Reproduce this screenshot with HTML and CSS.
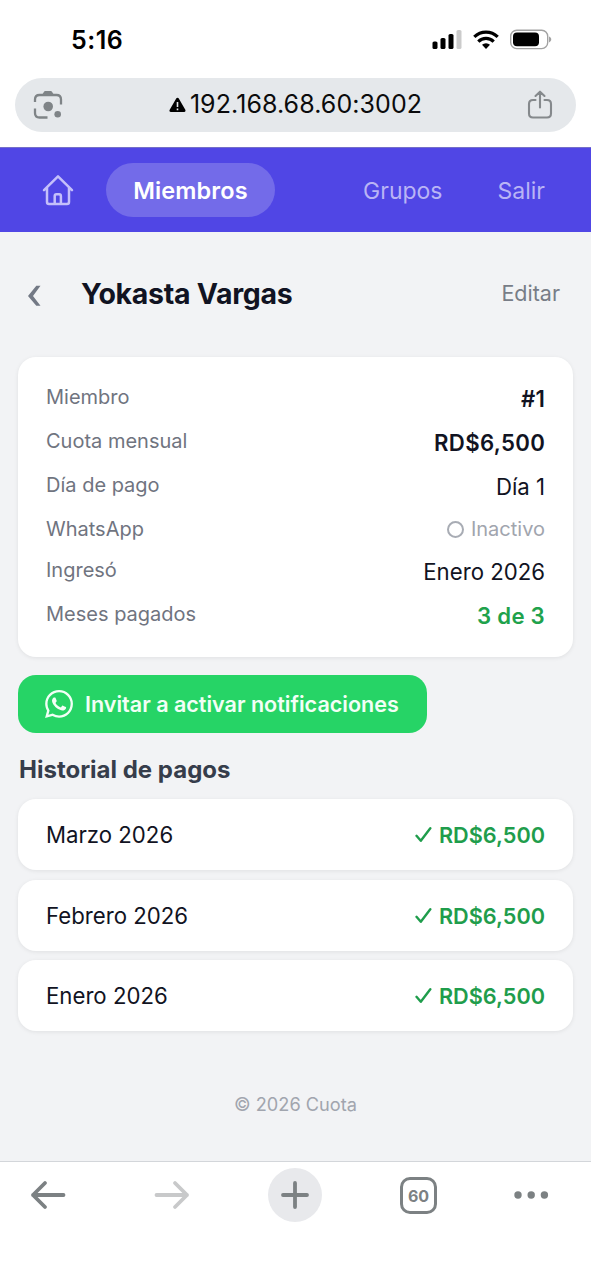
FILE: index.html
```html
<!DOCTYPE html>
<html lang="es">
<head>
<meta charset="utf-8">
<title>Cuota</title>
<link rel="stylesheet" href="styles.css">
</head>
<body>
<div class="status">
  <span class="clock">5:16</span>
  <svg class="status-icons" width="120" height="22" viewBox="0 0 120 22">
    <rect x="0.5" y="12.5" width="5" height="7.5" rx="1.6"/>
    <rect x="8.5" y="9" width="5" height="11" rx="1.6"/>
    <rect x="16.5" y="5" width="5" height="15" rx="1.6"/>
    <rect x="24.5" y="1" width="5" height="19" rx="1.6" fill="#cbcbcb"/>
    <path d="M54 20l-4-4.2a5.8 5.8 0 0 1 8 0z"/>
    <path d="M42.3 7.900a16.8 16.8 0 0 1 23.4 0M46.300 12.600a11 11 0 0 1 15.400 0" fill="none" stroke="#000" stroke-width="3.2"/>
    <rect x="78.700" y="1.200" width="37" height="18.400" rx="6" fill="none" stroke="#a2a2a2" stroke-width="1.4"/>
    <rect x="81" y="3.500" width="26" height="13.800" rx="4"/>
    <path d="M117 7.600c3 1 3 4.800 0 5.800z" fill="#a2a2a2"/>
  </svg>
</div>
<div class="address">
  <svg width="30" height="30" viewBox="0 0 30 30" fill="none" stroke="#7f8487" stroke-width="2.300" stroke-linecap="round">
    <path d="M2 12V9.500Q2 5 6.500 5h17Q28 5 28 9.500V14.500M2 18.500v4.500Q2 27.500 6.500 27.500h8" stroke-linecap="butt"/>
    <path d="M9 5l2-3.300q.4-.7 1.200-.7h5.600q.8 0 1.200.7l2 3.300z" fill="#7f8487" stroke="none"/>
    <circle cx="15.200" cy="16.500" r="4.800" fill="#7f8487" stroke="none"/>
    <circle cx="24.700" cy="24.300" r="3.300" fill="#7f8487" stroke="none"/>
  </svg>
  <span class="url">
    <svg width="17" height="16" viewBox="0 0 17 16"><path d="M8.500 2.200L2 13.500h13z" stroke="#000" stroke-width="3" stroke-linejoin="round"/><path d="M8.500 5v5M8.500 11.500v1.800" stroke="#e5e8eb" stroke-width="1.600"/></svg>
    <span class="url-text">192.168.68.60:3002</span>
  </span>
  <svg class="share" width="26" height="30" viewBox="0 0 26 30" fill="none" stroke="#85898c" stroke-width="2.100" stroke-linecap="round" stroke-linejoin="round">
    <path d="M8.500 10H6Q2 10 2 14v9.500Q2 27.500 6 27.500h14q4 0 4-4V14q0-4-4-4h-2.500M13 17.500V1.800M8.500 6L13 1.700 17.500 6"/>
  </svg>
</div>
<nav class="nav">
  <svg class="home" width="32" height="32" viewBox="0 0 32 32" fill="none" stroke="#c4bffa" stroke-width="2.500" stroke-linecap="round" stroke-linejoin="round">
    <path d="M2 16.200L16 2.400l14 13.800M5 13.500V28q0 2 2 2h18q2 0 2-2V13.500M12.700 30v-8q0-1.700 1.700-1.700h2.800q1.700 0 1.700 1.700v8"/>
  </svg>
  <a class="tab">Miembros</a>
  <a class="link grupos">Grupos</a>
  <a class="link salir">Salir</a>
</nav>
<main class="page">
  <header class="head">
    <svg width="15" height="22" viewBox="0 0 15 22"><path d="M9.300.7h4.200L6 10.900l7.500 9.900H9.300L1 10.900z" fill="#737985"/></svg>
    <h1>Yokasta Vargas</h1>
    <a class="edit">Editar</a>
  </header>
  <section class="card">
    <div class="row"><span class="label">Miembro</span><span class="value bold">#1</span></div>
    <div class="row"><span class="label">Cuota mensual</span><span class="value bold">RD$6,500</span></div>
    <div class="row"><span class="label">Día de pago</span><span class="value">Día 1</span></div>
    <div class="row"><span class="label">WhatsApp</span><span class="inactive"><i class="ring"></i>Inactivo</span></div>
    <div class="row"><span class="label">Ingresó</span><span class="value">Enero 2026</span></div>
    <div class="row"><span class="label">Meses pagados</span><span class="value paid">3 de 3</span></div>
  </section>
  <a class="invite">
    <svg width="28" height="28" viewBox="0 0 24 24" fill="#f2fff6"><path d="M17.472 14.382c-.297-.149-1.758-.867-2.030-.967-.273-.099-.471-.148-.670.150-.197.297-.767.966-.940 1.164-.173.199-.347.223-.644.075-.297-.150-1.255-.463-2.390-1.475-.883-.788-1.480-1.761-1.653-2.059-.173-.297-.018-.458.130-.606.134-.133.298-.347.446-.520.149-.174.198-.298.298-.497.099-.198.050-.371-.025-.520-.075-.149-.669-1.612-.916-2.207-.242-.579-.487-.500-.669-.510-.173-.008-.371-.010-.570-.010-.198 0-.520.074-.792.372-.272.297-1.040 1.016-1.040 2.479 0 1.462 1.065 2.875 1.213 3.074.149.198 2.096 3.200 5.077 4.487.709.306 1.262.489 1.694.625.712.227 1.360.195 1.871.118.571-.085 1.758-.719 2.006-1.413.248-.694.248-1.289.173-1.413-.074-.124-.272-.198-.570-.347m-5.421 7.403h-.004a9.870 9.870 0 0 1-5.031-1.378l-.361-.214-3.741.982.998-3.648-.235-.374a9.860 9.860 0 0 1-1.510-5.260c.001-5.450 4.436-9.884 9.888-9.884 2.640 0 5.122 1.030 6.988 2.898a9.825 9.825 0 0 1 2.893 6.994c-.003 5.450-4.437 9.884-9.885 9.884m8.413-18.297A11.815 11.815 0 0 0 12.050 0C5.495 0 .160 5.335.157 11.892c0 2.096.547 4.142 1.588 5.945L.057 24l6.305-1.654a11.882 11.882 0 0 0 5.683 1.448h.005c6.554 0 11.890-5.335 11.893-11.893a11.821 11.821 0 0 0-3.480-8.413z"/></svg>
    <span>Invitar a activar notificaciones</span>
  </a>
  <h2>Historial de pagos</h2>
  <ul class="history">
    <li><span class="month">Marzo 2026</span><span class="amount"><svg class="check" width="17" height="18" viewBox="0 0 17 18"><path d="M1.500 9.800l4.300 5L15.300 2.300" /></svg>RD$6,500</span></li>
    <li><span class="month">Febrero 2026</span><span class="amount"><svg class="check" width="17" height="18" viewBox="0 0 17 18"><path d="M1.500 9.800l4.300 5L15.300 2.300" /></svg>RD$6,500</span></li>
    <li><span class="month">Enero 2026</span><span class="amount"><svg class="check" width="17" height="18" viewBox="0 0 17 18"><path d="M1.500 9.800l4.300 5L15.300 2.300" /></svg>RD$6,500</span></li>
  </ul>
  <footer>© 2026 Cuota</footer>
</main>
<div class="toolbar">
  <svg width="36" height="30" viewBox="0 0 36 30"><path d="M33.500 15H3M15 3L3 15l12 12"/></svg>
  <svg class="dim" width="36" height="30" viewBox="0 0 36 30"><path d="M2.500 15H33M21 3l12 12-12 12"/></svg>
  <span class="plus"><svg width="30" height="30" viewBox="0 0 30 30"><path d="M15 3v24M3 15h24"/></svg></span>
  <span class="tabs">60</span>
  <svg class="dots" width="36" height="10" viewBox="0 0 36 10"><circle cx="5" cy="5" r="3.700"/><circle cx="18.200" cy="5" r="3.700"/><circle cx="31.400" cy="5" r="3.700"/></svg>
</div>
</body>
</html>
```
FILE: styles.css
```css
* { box-sizing: border-box; }
body {
  margin: 0;
  width: 591px;
  height: 1280px;
  overflow: hidden;
  display: flex;
  flex-direction: column;
  background: #fff;
  font-family: Inter, "Liberation Sans", sans-serif;
  color: #111322;
}
svg { display: block; flex: none; }
span, a, h1, h2 { white-space: nowrap; }

.status {
  height: 78px;
  padding: 0 39px 0 71px;
  display: flex;
  align-items: center;
  justify-content: space-between;
  color: #000;
}
.clock { font-size: 25px; font-weight: 600; letter-spacing: 0.5px; padding-top: 2px; }
.status-icons { margin-top: 2px; }

.address {
  height: 54px;
  margin: 0 15px;
  padding: 0 22px 0 18px;
  border-radius: 27px;
  background: #e5e8eb;
  display: flex;
  align-items: center;
  justify-content: space-between;
  color: #0b0b0c;
}
.share { margin-right: 1px; }
.url { display: flex; align-items: center; gap: 4px; padding-left: 1px; }
.url-text { font-size: 25px; letter-spacing: 0.08px; padding-bottom: 2px; }

.nav {
  height: 85px;
  margin-top: 15px;
  padding: 0 46px 0 42px;
  background: #5046e5;
  border-top: 1px solid #756fc9;
  display: flex;
  align-items: center;
}
.tab {
  width: 169px;
  height: 54px;
  margin-left: 32px;
  border-radius: 27px;
  background: #736be9;
  color: #fff;
  font-size: 23.500px;
  font-weight: 600;
  line-height: 55px;
  letter-spacing: 0.1px;
  text-align: center;
}
.link { color: #b9b4f5; font-size: 23px; padding-top: 2px; }
.grupos { margin-left: auto; }
.salir { margin-left: 55px; }

.page {
  height: 929px;
  padding: 0 18px;
  background: #f2f3f5;
  display: flex;
  flex-direction: column;
}
.head {
  height: 125px;
  padding: 0 13px 3px 9px;
  display: flex;
  align-items: center;
}
.head svg { margin-top: 6px; }
h1 { margin: 0 0 0 39px; font-size: 28.500px; font-weight: 700; letter-spacing: -0.3px; }
.edit { margin-left: auto; color: #787d87; font-size: 21.500px; }

.card {
  height: 300px;
  padding: 24px 28px 0;
  background: #fff;
  border-radius: 18px;
  box-shadow: 0 1px 4px rgba(0, 0, 0, .08);
  display: flex;
  flex-direction: column;
  gap: 8px;
}
.row { display: flex; align-items: flex-start; justify-content: space-between; }
.label { color: #70747f; font-size: 20px; line-height: 32px; }
.value { height: 36px; font-size: 22.200px; line-height: 35px; }
.bold { font-weight: 600; letter-spacing: 0.35px; margin-right: -0.35px; }
.paid { font-weight: 600; letter-spacing: 0.25px; color: #1fa24c; }
.inactive {
  display: flex;
  align-items: center;
  gap: 7px;
  color: #a1a5ae;
  font-size: 20px;
  line-height: 33px;
}
.ring { width: 17px; height: 17px; border: 2px solid #a8acb4; border-radius: 50%; }

.invite {
  align-self: flex-start;
  width: 409px;
  height: 58px;
  margin-top: 18px;
  padding-left: 27px;
  border-radius: 18px;
  background: #26d466;
  color: #f2fff6;
  display: flex;
  align-items: center;
  gap: 12px;
  font-size: 21.550px;
  font-weight: 600;
}
h2 { margin: 18px 0 0 1px; color: #363d4b; font-size: 24px; font-weight: 700; line-height: 38px; letter-spacing: 0; }

.history { margin: 10px 0 0; padding: 0; list-style: none; display: flex; flex-direction: column; gap: 9.500px; }
.history li {
  height: 71px;
  padding: 1px 28px 0;
  border-radius: 18px;
  background: #fff;
  box-shadow: 0 1px 4px rgba(0, 0, 0, .08);
  display: flex;
  align-items: center;
  justify-content: space-between;
  font-size: 22.200px;
}
.month { padding-bottom: 1px; }
.amount { display: flex; align-items: center; gap: 7px; color: #1f9d4c; font-weight: 600; font-size: 21.700px; }
.check { fill: none; stroke: #1f9d4c; stroke-width: 2.400; stroke-linecap: round; stroke-linejoin: round; }
footer { margin-top: 61px; text-align: center; color: #a1a5ae; font-size: 18.200px; line-height: 24px; }

.toolbar {
  height: 119px;
  padding: 6px 42px 0 30px;
  border-top: 1px solid #d3d6da;
  background: #fff;
  display: grid;
  grid-template-columns: 124px 114px 132px 113px 36px;
  grid-template-rows: 54px;
  align-items: center;
}
.toolbar svg { fill: none; stroke: #7c8183; stroke-width: 3.800; stroke-linecap: round; stroke-linejoin: round; }
.toolbar .dim { stroke: #c8c9ca; }
.toolbar .dots { fill: #7c8183; stroke: none; }
.plus { width: 54px; height: 54px; border-radius: 50%; background: #e8e9ec; display: grid; place-items: center; }
.tabs {
  width: 37px;
  height: 37px;
  border: 3px solid #7c8183;
  border-radius: 10px;
  color: #7c8183;
  font-size: 16px;
  font-weight: 700;
  line-height: 32px;
  text-align: center;
}
```
